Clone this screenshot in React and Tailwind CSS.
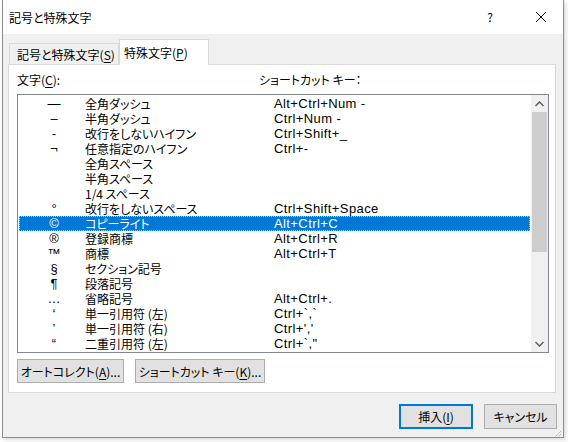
import React from 'react';

const rows = [
  { sym: '—', name: '全角ダッシュ', key: 'Alt+Ctrl+Num -' },
  { sym: '–', name: '半角ダッシュ', key: 'Ctrl+Num -' },
  { sym: '-', name: '改行をしないハイフン', key: 'Ctrl+Shift+_' },
  { sym: '¬', name: '任意指定のハイフン', key: 'Ctrl+-' },
  { sym: '', name: '全角スペース', key: '' },
  { sym: '', name: '半角スペース', key: '' },
  { sym: '', name: '1/4 スペース', key: '' },
  { sym: '°', name: '改行をしないスペース', key: 'Ctrl+Shift+Space' },
  { sym: '©', name: 'コピーライト', key: 'Alt+Ctrl+C', selected: true },
  { sym: '®', name: '登録商標', key: 'Alt+Ctrl+R' },
  { sym: '™', name: '商標', key: 'Alt+Ctrl+T' },
  { sym: '§', name: 'セクション記号', key: '' },
  { sym: '¶', name: '段落記号', key: '' },
  { sym: '…', name: '省略記号', key: 'Alt+Ctrl+.' },
  { sym: '‘', name: '単一引用符 (左)', key: 'Ctrl+`,`' },
  { sym: '’', name: '単一引用符 (右)', key: "Ctrl+','" },
  { sym: '“', name: '二重引用符 (左)', key: 'Ctrl+`,"' },
];

const U = ({ children }) => <span className="underline underline-offset-2">{children}</span>;

const ListRow = ({ row }) => (
  <div
    className={
      'flex h-[15px] leading-[15px] mx-[1px] whitespace-nowrap ' +
      (row.selected
        ? 'bg-[#0078d7] text-white outline outline-1 outline-dotted outline-offset-[-1px] outline-[#e8c070]'
        : 'text-black')
    }
  >
    <div className="w-[66px] pl-[4px] text-center font-['Liberation_Sans',sans-serif] text-[13px]">{row.sym}</div>
    <div className="w-[189px]">{row.name}</div>
    <div className="flex-1 font-['Liberation_Sans',sans-serif] text-[13px] tracking-[0.4px]">{row.key}</div>
  </div>
);

export default function App() {
  return (
    <div className="w-[568px] h-[442px] bg-white overflow-hidden font-['Noto_Sans_CJK_JP',sans-serif] text-[12px] text-black [font-feature-settings:'palt']">
      <div className="ml-[2px] w-[562px] h-[438px] border-x border-b border-[#8c8c8c] bg-[#f0f0f0] flex flex-col shadow-[2px_2px_4px_rgba(0,0,0,0.15)]">
        {/* title bar */}
        <div className="h-[34px] bg-white flex items-center pl-[6px] shrink-0">
          <span className="flex-1 leading-[15px]">記号と特殊文字</span>
          <span className="w-[14px] text-center mr-[38px]">?</span>
          <svg width="12" height="12" viewBox="0 0 12 12" className="mr-[16px]">
            <path d="M1 1 L11 11 M11 1 L1 11" stroke="#000" strokeWidth="1" />
          </svg>
        </div>

        {/* tabs */}
        <div className="flex items-end h-[30px] pl-[6px] pt-[5px] shrink-0">
          <div className="h-[21px] w-[110px] border border-b-0 border-[#d9d9d9] bg-[#f0f0f0] flex items-center pl-[7px] leading-[15px] whitespace-nowrap">
            記号と特殊文字(<U>S</U>)
          </div>
          <div className="h-[26px] w-[90px] border border-b-0 border-[#d9d9d9] bg-white flex items-center pl-[4px] leading-[15px] relative top-[1px] z-10 whitespace-nowrap">
            特殊文字(<U>P</U>)
          </div>
        </div>

        {/* panel */}
        <div className="ml-[5px] mr-[7px] h-[329px] border border-[#d9d9d9] bg-white flex flex-col px-[8px] shrink-0">
          <div className="flex h-[29px] items-center leading-[15px] whitespace-nowrap">
            <span className="w-[242px]">
              文字(<U>C</U>):
            </span>
            <span>ショートカット キー：</span>
          </div>
          <div className="h-[259px] w-[532px] border border-[#828790] flex">
            <div className="flex-1 pt-[1px]">
              {rows.map((r, i) => (
                <ListRow key={i} row={r} />
              ))}
            </div>
            <div className="w-[17px] bg-[#f0f0f0] flex flex-col">
              <div className="h-[17px] flex items-center justify-center">
                <svg width="9" height="6" viewBox="0 0 9 6">
                  <path d="M0.5 5 L4.5 1 L8.5 5" stroke="#606060" strokeWidth="1.5" fill="none" />
                </svg>
              </div>
              <div className="h-[140px] mx-[1px] bg-[#cdcdcd]" />
              <div className="flex-1" />
              <div className="h-[17px] flex items-center justify-center">
                <svg width="9" height="6" viewBox="0 0 9 6">
                  <path d="M0.5 1 L4.5 5 L8.5 1" stroke="#606060" strokeWidth="1.5" fill="none" />
                </svg>
              </div>
            </div>
          </div>
          <div className="flex gap-[11px] mt-[6px]">
            <button className="h-[24px] w-[107px] border border-[#adadad] bg-[#e1e1e1] leading-[15px] whitespace-nowrap">
              オートコレクト(<U>A</U>)...
            </button>
            <button className="h-[24px] w-[130px] border border-[#adadad] bg-[#e1e1e1] leading-[15px] whitespace-nowrap">
              ショートカット キー(<U>K</U>)...
            </button>
          </div>
        </div>

        {/* bottom buttons */}
        <div className="flex justify-end gap-[11px] mr-[6px] mt-[11px]">
          <button className="h-[25px] w-[74px] border-2 border-[#0078d7] bg-[#e1e1e1] leading-[15px] whitespace-nowrap">
            挿入(<U>I</U>)
          </button>
          <button className="h-[25px] w-[73px] border border-[#adadad] bg-[#e1e1e1] leading-[15px] whitespace-nowrap">
            キャンセル
          </button>
        </div>
        <div className="flex-1 flex justify-end items-end pr-[1px] pb-[1px]">
          <svg width="10" height="10" viewBox="0 0 10 10">
            <path d="M9 2 L2 9 M9 5 L5 9 M9 8 L8 9" stroke="#a0a0a0" strokeWidth="1" strokeDasharray="1 1" />
          </svg>
        </div>
      </div>
    </div>
  );
}
